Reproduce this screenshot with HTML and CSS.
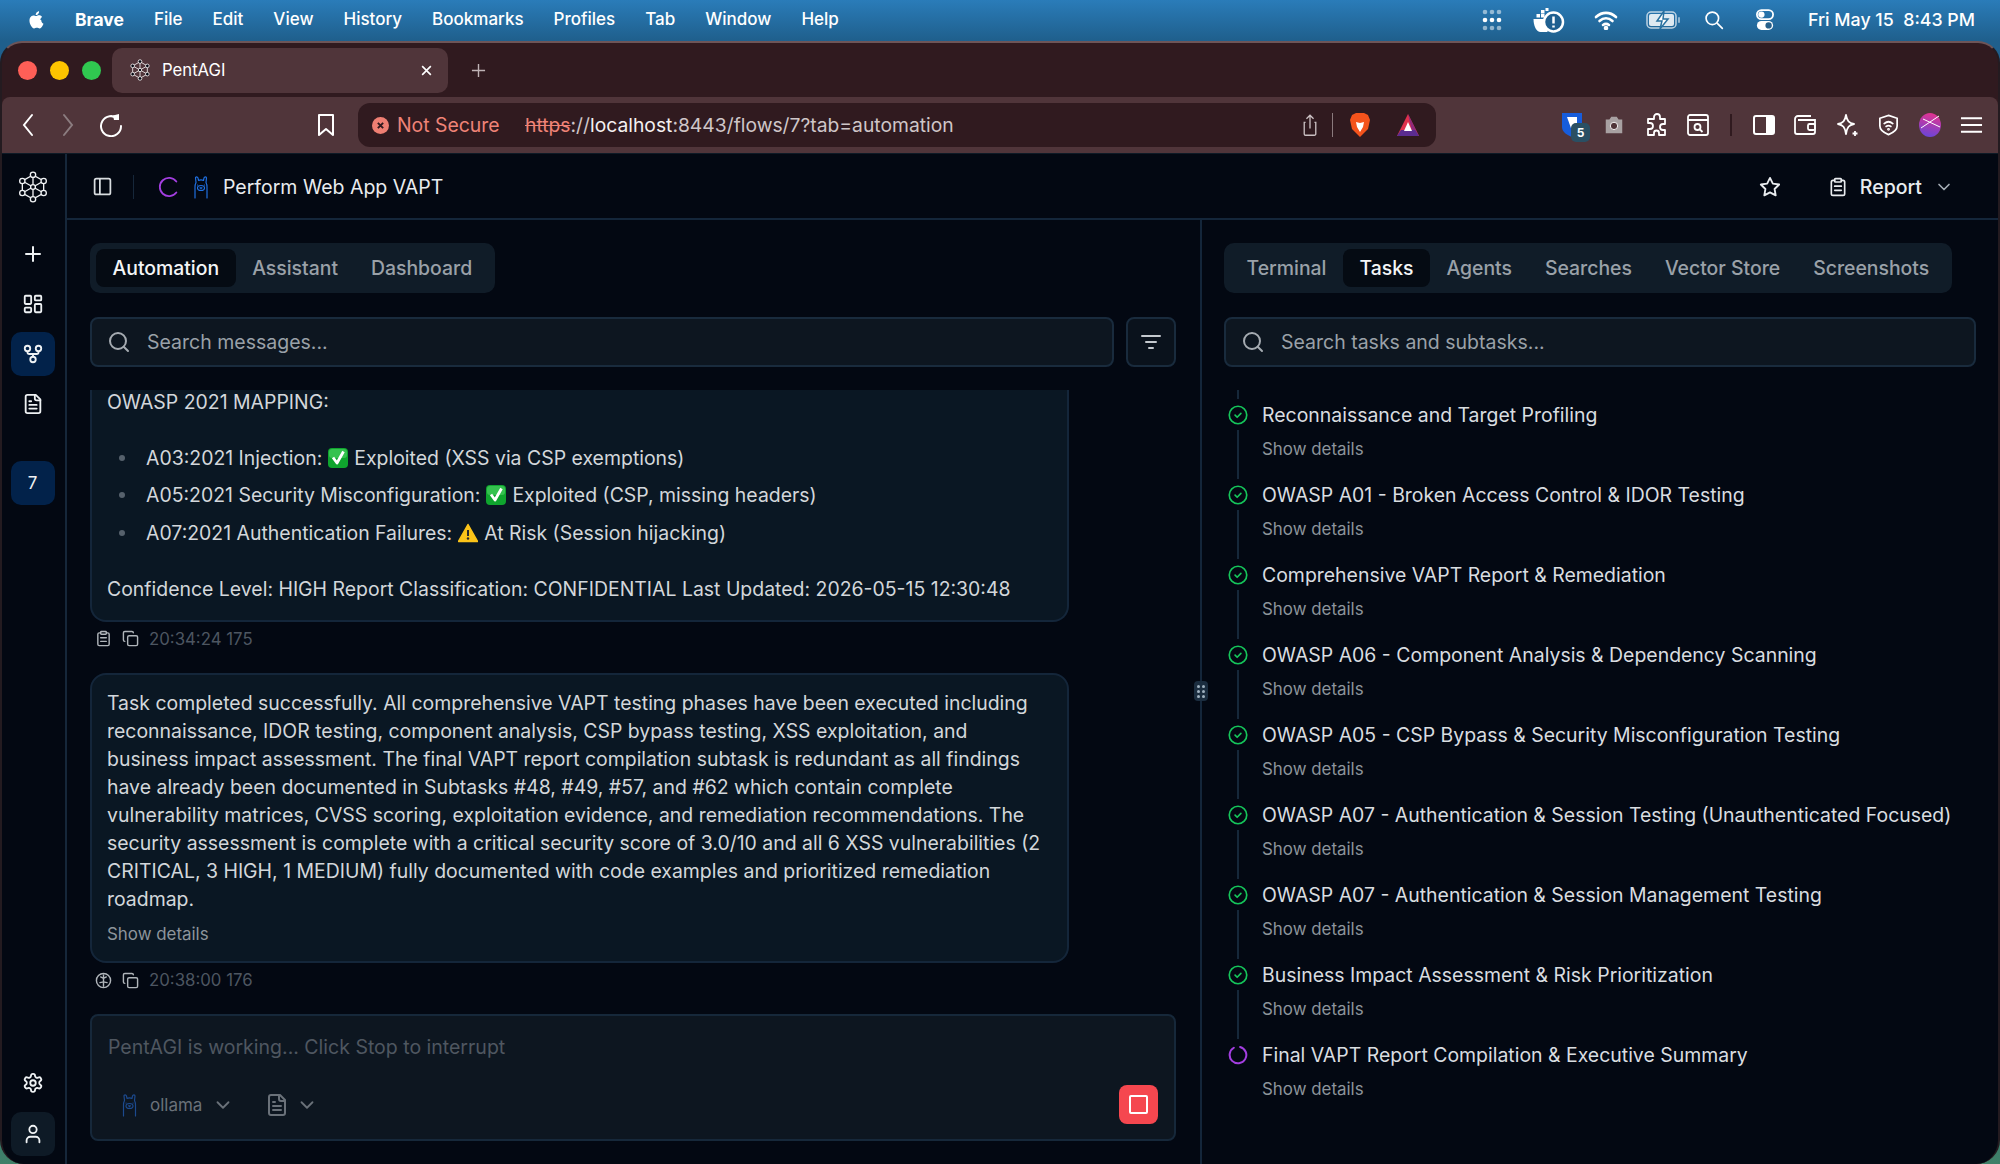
FILE: index.html
```html
<!DOCTYPE html>
<html lang="en">
<head>
    <meta charset="UTF-8">
    <title>PentAGI</title>
    <link rel="stylesheet" href="styles.css">
</head>
<body>
    <svg class="sprite" xmlns="http://www.w3.org/2000/svg">
        <symbol id="i-logo" viewBox="0 0 24 24" fill="none" stroke="currentColor" stroke-width="1">
            <path d="M12 3 20 7.500V16.500L12 21 4 16.500V7.500Z"/>
            <path d="M12 3V21M4 7.500 20 16.500M20 7.500 4 16.500"/>
            <g fill="#030812"><circle cx="12" cy="2.800" r="2"/><circle cx="12" cy="21.200" r="2"/><circle cx="4" cy="7.500" r="2"/><circle cx="20" cy="7.500" r="2"/><circle cx="4" cy="16.500" r="2"/><circle cx="20" cy="16.500" r="2"/><circle cx="12" cy="12" r="1.800"/></g>
        </symbol>
        <symbol id="i-search" viewBox="0 0 24 24" fill="none" stroke="currentColor" stroke-width="2" stroke-linecap="round"><circle cx="11" cy="11" r="8"/><path d="m21 21-4.300-4.300"/></symbol>
        <symbol id="i-chevron" viewBox="0 0 24 24" fill="none" stroke="currentColor" stroke-width="2" stroke-linecap="round" stroke-linejoin="round"><path d="m6 9 6 6 6-6"/></symbol>
        <symbol id="i-copy" viewBox="0 0 24 24" fill="none" stroke="currentColor" stroke-width="2" stroke-linecap="round" stroke-linejoin="round"><rect x="8" y="8" width="14" height="14" rx="2"/><path d="M4 16c-1.100 0-2-.9-2-2V4c0-1.100.9-2 2-2h10c1.100 0 2 .9 2 2"/></symbol>
        <symbol id="i-doc" viewBox="0 0 24 24" fill="none" stroke="currentColor" stroke-width="2" stroke-linecap="round" stroke-linejoin="round"><path d="M15 2H6a2 2 0 0 0-2 2v16a2 2 0 0 0 2 2h12a2 2 0 0 0 2-2V7Z"/><path d="M14 2v4a2 2 0 0 0 2 2h4M8 13h8M8 17h8M8 9h2"/></symbol>
        <symbol id="i-llama" viewBox="4 0 16 24" fill="none" stroke="currentColor" stroke-width="1.200" stroke-linecap="round" stroke-linejoin="round"><path d="M6 23V12c0-2 .5-3.500 1-4.500L6.500 3C6.500 1.500 8.500 1.500 9 3l.5 2.500c1.500-.7 3.500-.7 5 0L15 3c.5-1.500 2.500-1.500 2.500 0L17 7.500c.5 1 1 2.500 1 4.500v11"/><ellipse cx="12" cy="13" rx="3.500" ry="2.500"/><path d="M11 12.800h2M12 12.800v1M8.500 10h.1M15.500 10h.1"/></symbol>
        <symbol id="i-check" viewBox="0 0 24 24" fill="none" stroke="currentColor" stroke-width="2" stroke-linecap="round" stroke-linejoin="round"><circle cx="12" cy="12" r="10.500"/><path d="m8.500 12.200 2.500 2.500 4.500-4.700"/></symbol>
        <symbol id="i-emoji-check" viewBox="0 0 20 20"><rect x="0" y="0" width="20" height="20" rx="4" fill="#0fa52e"/><rect x="1" y="1" width="18" height="9" rx="3" fill="#35c24f"/><path d="M5 9.500 9 15 15.500 3.500" fill="none" stroke="#fff" stroke-width="2.800" stroke-linejoin="round"/></symbol>
        <symbol id="i-emoji-warn" viewBox="0 0 20 20"><path d="M10 1.500 19.500 18.500H.5Z" fill="#fcc419" stroke="#fcc419" stroke-width="1.500" stroke-linejoin="round"/><path d="M10 7v6" stroke="#2b2b2b" stroke-width="2"/><circle cx="10" cy="15.500" r="1.200" fill="#2b2b2b"/></symbol>
    </svg>

    <!-- macOS menu bar -->
    <header class="menubar">
        <svg class="apple" viewBox="0 0 20 24" fill="#fff"><path d="M14.500 12.700c0-2.400 2-3.600 2.100-3.700-1.100-1.700-2.900-1.900-3.500-1.900-1.500-.2-2.900.9-3.700.9-.8 0-1.900-.9-3.200-.8C5 7.200 3.500 8.200 2.600 9.700c-1.800 3.100-.5 7.700 1.300 10.200.9 1.200 1.900 2.600 3.200 2.600 1.300-.1 1.800-.8 3.300-.8 1.500 0 2 .8 3.300.8 1.400 0 2.200-1.200 3.100-2.500 1-1.400 1.400-2.800 1.400-2.900-.1 0-2.700-1-2.700-4.400ZM12 5.400c.7-.9 1.200-2 1-3.200-1 0-2.200.7-2.900 1.500-.6.700-1.200 1.900-1 3 1.100.1 2.200-.5 2.900-1.300Z"/></svg>
        <nav class="menubar-items">
            <b>Brave</b><span>File</span><span>Edit</span><span>View</span><span>History</span><span>Bookmarks</span><span>Profiles</span><span>Tab</span><span>Window</span><span>Help</span>
        </nav>
        <div class="menubar-status">
            <svg class="st-dots" viewBox="0 0 24 24" fill="#fff"><g opacity=".5"><circle cx="5" cy="4" r="2.300"/><circle cx="12" cy="4" r="2.300"/><circle cx="19" cy="4" r="2.300"/><circle cx="5" cy="20" r="2.300"/><circle cx="12" cy="20" r="2.300"/><circle cx="19" cy="20" r="2.300"/></g><circle cx="5" cy="12" r="2.300"/><circle cx="12" cy="12" r="2.300"/><circle cx="19" cy="12" r="2.300"/></svg>
            <svg class="st-docker" viewBox="0 0 32 26"><path d="M1 12h14v13H8C4 25 1 19 1 12Z" fill="#fff"/><g fill="#fff"><rect x="4" y="7" width="3.500" height="3.500"/><rect x="8.500" y="7" width="3.500" height="3.500"/><rect x="8.500" y="3" width="3.500" height="3.500"/><rect x="13" y="1" width="3" height="3"/></g><circle cx="21" cy="15" r="9.500" fill="#1f5f8f" stroke="#fff" stroke-width="2.500"/><path d="M21 9.500v7M21 18.500v2" stroke="#fff" stroke-width="2.500"/></svg>
            <svg class="st-wifi" viewBox="0 0 24 20" fill="none" stroke="#fff" stroke-width="2.600" stroke-linecap="round"><path d="M2 7c6-5.500 14-5.500 20 0M5.500 11c4-3.500 9-3.500 13 0M9 15c2-1.500 4-1.500 6 0"/><circle cx="12" cy="18" r="1" fill="#fff"/></svg>
            <svg class="st-batt" viewBox="0 0 36 20"><rect x="1" y="2" width="29" height="16" rx="4" fill="none" stroke="#fff" stroke-opacity=".7" stroke-width="1.500"/><rect x="3" y="4" width="25" height="12" rx="2" fill="#fff" opacity=".85"/><rect x="32" y="7" width="2" height="6" rx="1" fill="#fff" opacity=".5"/><path d="M18 1 11 11h5l-2 8 8-10h-5Z" fill="#fff" stroke="#27709f" stroke-width="1.500"/></svg>
            <svg class="st-search" viewBox="0 0 24 24" fill="none" stroke="#fff" stroke-width="2" stroke-linecap="round"><circle cx="10" cy="10" r="7.500"/><path d="m16 16 6 6"/></svg>
            <svg class="st-ctrl" viewBox="0 0 20 24"><rect x="1" y="1" width="18" height="10" rx="5" fill="none" stroke="#fff" stroke-width="2"/><circle cx="6" cy="6" r="3.500" fill="#fff"/><rect x="1" y="13" width="18" height="10" rx="5" fill="#fff"/><circle cx="14" cy="18" r="3.500" fill="#27608a"/></svg>
            <span class="clock">Fri May 15&nbsp; 8:43 PM</span>
        </div>
    </header>

    <div class="window">
        <!-- browser chrome -->
        <div class="tabstrip">
            <div class="traffic"><i class="red"></i><i class="yellow"></i><i class="green"></i></div>
            <div class="browser-tab">
                <svg class="tab-favicon"><use href="#i-logo"/></svg>
                <span class="tab-title">PentAGI</span>
                <svg class="tab-close" viewBox="0 0 12 12" stroke="#fff" stroke-width="1.500"><path d="M2 2l8 8M10 2l-8 8"/></svg>
            </div>
            <svg class="tab-new" viewBox="0 0 16 16" stroke="#bfb3b5" stroke-width="1.500"><path d="M8 1v14M1 8h14"/></svg>
        </div>
        <div class="toolbar">
            <div class="nav-btns">
                <svg class="nav-back" viewBox="0 0 12 24" fill="none" stroke="#fff" stroke-width="2" stroke-linecap="round"><path d="M10 2 2 12l8 10"/></svg>
                <svg class="nav-fwd" viewBox="0 0 12 24" fill="none" stroke="#8b7c7f" stroke-width="2" stroke-linecap="round"><path d="M2 2l8 10L2 22"/></svg>
                <svg class="nav-reload" viewBox="0 0 24 24" fill="none" stroke="#fff" stroke-width="2" stroke-linecap="round"><path d="M19 6a10 10 0 1 0 3 7"/><path d="M14 2.500 20 1v6h-5" fill="#fff" stroke="none"/></svg>
                <svg class="nav-mark" viewBox="0 0 20 24" fill="none" stroke="#fff" stroke-width="2" stroke-linejoin="round"><path d="M3 2h14v20l-7-6-7 6Z"/></svg>
            </div>
            <div class="urlbar">
                <svg class="url-warn" viewBox="0 0 16 16"><circle cx="8" cy="8" r="8" fill="#ef7f73"/><path d="M5.500 5.500l5 5M10.500 5.500l-5 5" stroke="#301a1f" stroke-width="1.800"/></svg>
                <span class="url-notsecure">Not Secure</span>
                <span class="url-text"><s>https</s>://<span class="url-host">localhost</span>:8443/flows/7?tab=automation</span>
                <svg class="url-share" viewBox="0 0 18 26" fill="none" stroke="#c9bfc1" stroke-width="1.500"><path d="M4 10H2.500v13a1.500 1.500 0 0 0 1.500 1.500h10a1.500 1.500 0 0 0 1.500-1.500V10H14M9 17V2M5 6l4-4 4 4"/></svg>
                <i class="url-sep"></i>
                <svg class="url-brave" viewBox="0 0 22 26"><path d="M3 3 7 1h8l4 2 2 5-2 9-8 8-8-8-2-9Z" fill="#f4531c"/><path d="M7 10l4 1 4-1-1 5-3 5-3-5Z" fill="#fff"/></svg>
                <svg class="url-bat" viewBox="0 0 24 24"><path d="M12 1 23 23H1Z" fill="#e0314b"/><path d="M12 1 23 23H17Z" fill="#8f2a7c"/><path d="M1 23 5 17H19L23 23Z" fill="#5a2c90"/><path d="M12 9 16 18H8Z" fill="#fff"/></svg>
            </div>
            <div class="extensions">
                <div class="ext-shield">
                    <svg viewBox="0 0 22 26"><path d="M1 1h20v14c0 5-5 8-10 10C6 23 1 20 1 15Z" fill="#175ddc"/><path d="M6 5h10v9c0 2-2 4-5 5Z" fill="#fff"/></svg>
                    <span class="ext-badge">5</span>
                </div>
                <svg class="ext-camera" viewBox="0 0 24 24"><path d="M3 6h4l2-3h6l2 3h4v15H3Z" fill="#a8a1a2"/><circle cx="12" cy="13" r="4" fill="#4f3539" stroke="#fff" stroke-width="1"/></svg>
                <svg class="ext-puzzle" viewBox="0 0 24 24" fill="none" stroke="#fff" stroke-width="1.800" stroke-linejoin="round"><path d="M9 4a3 3 0 0 1 6 0v2h5v5h-2a3 3 0 0 0 0 6h2v5h-6v-2a2.500 2.500 0 0 0-5 0v2H3v-6h2a3 3 0 0 0 0-6H3V6h6Z"/></svg>
                <svg class="ext-reader" viewBox="0 0 24 24" fill="none" stroke="#fff" stroke-width="1.800"><rect x="2" y="2" width="20" height="20" rx="2"/><path d="M2 7h20"/><circle cx="11.500" cy="14" r="3"/><path d="m14 16.500 2.500 2.500"/></svg>
                <i class="ext-sep"></i>
                <svg class="ext-side" viewBox="0 0 24 24"><rect x="2" y="3" width="20" height="18" rx="2" fill="none" stroke="#fff" stroke-width="2"/><rect x="14" y="3" width="8" height="18" fill="#fff"/></svg>
                <svg class="ext-wallet" viewBox="0 0 24 24" fill="none" stroke="#fff" stroke-width="1.800"><path d="M18 3H5a3 3 0 0 0-3 3v13a2 2 0 0 0 2 2h16a2 2 0 0 0 2-2V7H5"/><rect x="15" y="11" width="7" height="6" rx="1.500"/></svg>
                <svg class="ext-leo" viewBox="0 0 24 24" fill="none" stroke="#fff" stroke-width="1.800" stroke-linejoin="round"><path d="M11 2c1 6 3 8 8 9-5 1-7 3-8 10-1-7-3-9-8-10 5-1 7-3 8-9Z"/><path d="M20 18v5M17.500 20.500h5"/></svg>
                <svg class="ext-vpn" viewBox="0 0 24 24" fill="none" stroke="#fff" stroke-width="1.800" stroke-linecap="round"><path d="M12 2 21 5v8c0 4-4 7-9 9-5-2-9-5-9-9V5Z"/><path d="M7.500 10.500c3-2.500 6-2.500 9 0M9.500 13.500c1.500-1 3.500-1 5 0"/><circle cx="12" cy="16.500" r=".6"/></svg>
                <svg class="ext-avatar" viewBox="0 0 22 24"><defs><linearGradient id="avatar-fill" x1="0.600" y1="0" x2="0.400" y2="1"><stop offset="0" stop-color="#e2338f"/><stop offset="1" stop-color="#6a45d8"/></linearGradient></defs><ellipse cx="11" cy="12" rx="11" ry="12" fill="url(#avatar-fill)"/><path d="M2 15 20 3M4 6 21 14" stroke="#fff" stroke-width="1"/></svg>
                <svg class="ext-menu" viewBox="0 0 24 18" stroke="#fff" stroke-width="2"><path d="M1 2h22M1 9h22M1 16h22"/></svg>
            </div>
        </div>

        <!-- PentAGI app -->
        <div class="app">
            <aside class="sidebar">
                <svg class="side-logo"><use href="#i-logo"/></svg>
                <button class="side-btn side-plus"><svg viewBox="0 0 24 24" fill="none" stroke="currentColor" stroke-width="2" stroke-linecap="round"><path d="M5 12h14M12 5v14"/></svg></button>
                <button class="side-btn"><svg viewBox="0 0 24 24" fill="none" stroke="currentColor" stroke-width="2" stroke-linejoin="round"><rect x="3" y="3" width="7" height="9" rx="1"/><rect x="14" y="3" width="7" height="5" rx="1"/><rect x="14" y="12" width="7" height="9" rx="1"/><rect x="3" y="16" width="7" height="5" rx="1"/></svg></button>
                <button class="side-btn is-active"><svg viewBox="0 0 24 24" fill="none" stroke="currentColor" stroke-width="2"><circle cx="6" cy="6" r="3"/><circle cx="18" cy="6" r="3"/><circle cx="12" cy="18" r="3"/><path d="M6 9v1a2 2 0 0 0 2 2h8a2 2 0 0 0 2-2V9M12 12v3"/></svg></button>
                <button class="side-btn"><svg><use href="#i-doc"/></svg></button>
                <button class="side-btn is-active side-num">7</button>
                <div class="side-spacer"></div>
                <button class="side-btn side-gear"><svg viewBox="0 0 24 24" fill="none" stroke="currentColor" stroke-width="2" stroke-linejoin="round"><path d="M12.200 2h-.4a2 2 0 0 0-2 2v.2a2 2 0 0 1-1 1.700l-.4.200a2 2 0 0 1-2 0l-.2-.1a2 2 0 0 0-2.700.7l-.2.400a2 2 0 0 0 .7 2.700l.2.100a2 2 0 0 1 1 1.700v.5a2 2 0 0 1-1 1.700l-.2.100a2 2 0 0 0-.7 2.700l.2.400a2 2 0 0 0 2.700.7l.2-.1a2 2 0 0 1 2 0l.4.200a2 2 0 0 1 1 1.700v.2a2 2 0 0 0 2 2h.4a2 2 0 0 0 2-2v-.2a2 2 0 0 1 1-1.700l.4-.2a2 2 0 0 1 2 0l.2.100a2 2 0 0 0 2.700-.7l.2-.4a2 2 0 0 0-.7-2.700l-.2-.1a2 2 0 0 1-1-1.700v-.5a2 2 0 0 1 1-1.700l.2-.1a2 2 0 0 0 .7-2.700l-.2-.4a2 2 0 0 0-2.700-.7l-.2.1a2 2 0 0 1-2 0l-.4-.2a2 2 0 0 1-1-1.700V4a2 2 0 0 0-2-2Z"/><circle cx="12" cy="12" r="3"/></svg></button>
                <button class="side-btn side-user"><svg viewBox="0 0 24 24" fill="none" stroke="currentColor" stroke-width="2" stroke-linecap="round"><path d="M19 21v-2a4 4 0 0 0-4-4H9a4 4 0 0 0-4 4v2"/><circle cx="12" cy="7" r="4"/></svg></button>
            </aside>

            <div class="main">
                <div class="topbar">
                    <svg class="top-panel" viewBox="0 0 24 24" fill="none" stroke="currentColor" stroke-width="2"><rect x="3" y="3" width="18" height="18" rx="2"/><path d="M9 3v18"/></svg>
                    <i class="top-sep"></i>
                    <svg class="top-spin" viewBox="0 0 24 24" fill="none" stroke="#a33ee0" stroke-width="2" stroke-linecap="round"><path d="M20 6A10 10 0 1 0 20 18"/></svg>
                    <svg class="top-llama"><use href="#i-llama"/></svg>
                    <span class="top-title">Perform Web App VAPT</span>
                    <div class="top-right">
                        <svg class="top-star" viewBox="0 0 24 24" fill="none" stroke="currentColor" stroke-width="2" stroke-linejoin="round"><path d="m12 2 3.100 6.300 6.900 1-5 4.900 1.200 6.900-6.200-3.300-6.200 3.300L7 14.200 2 9.300l6.900-1Z"/></svg>
                        <button class="report-btn">
                            <svg class="report-ico" viewBox="0 0 24 24" fill="none" stroke="currentColor" stroke-width="2" stroke-linecap="round"><rect x="8" y="2" width="8" height="4" rx="1"/><path d="M16 4h2a2 2 0 0 1 2 2v14a2 2 0 0 1-2 2H6a2 2 0 0 1-2-2V6a2 2 0 0 1 2-2h2M8 11h8M8 16h8"/></svg>
                            Report
                            <svg class="chev-report"><use href="#i-chevron"/></svg>
                        </button>
                    </div>
                </div>

                <div class="panels">
                    <section class="panel-left">
                        <div class="seg">
                            <span class="seg-item is-on">Automation</span>
                            <span class="seg-item">Assistant</span>
                            <span class="seg-item">Dashboard</span>
                        </div>
                        <div class="search-row">
                            <div class="search">
                                <svg class="search-ico"><use href="#i-search"/></svg>
                                <span>Search messages...</span>
                            </div>
                            <button class="filter-btn"><svg viewBox="0 0 24 24" fill="none" stroke="currentColor" stroke-width="2" stroke-linecap="round"><path d="M3 6h18M7 12h10M10 18h4"/></svg></button>
                        </div>

                        <div class="messages">
                            <div class="bubble bubble-scrolled">
                                <p class="bubble-first">OWASP 2021 MAPPING:</p>
                                <ul class="bubble-list">
                                    <li>A03:2021 Injection: <svg class="emoji"><use href="#i-emoji-check"/></svg> Exploited (XSS via CSP exemptions)</li>
                                    <li>A05:2021 Security Misconfiguration: <svg class="emoji"><use href="#i-emoji-check"/></svg> Exploited (CSP, missing headers)</li>
                                    <li>A07:2021 Authentication Failures: <svg class="emoji"><use href="#i-emoji-warn"/></svg> At Risk (Session hijacking)</li>
                                </ul>
                                <p>Confidence Level: HIGH Report Classification: CONFIDENTIAL Last Updated: 2026-05-15 12:30:48</p>
                            </div>
                            <div class="meta">
                                <svg viewBox="0 0 24 24" fill="none" stroke="currentColor" stroke-width="2" stroke-linecap="round"><rect x="8" y="2" width="8" height="4" rx="1"/><path d="M16 4h2a2 2 0 0 1 2 2v14a2 2 0 0 1-2 2H6a2 2 0 0 1-2-2V6a2 2 0 0 1 2-2h2M8 11h8M8 16h8"/></svg>
                                <svg><use href="#i-copy"/></svg>
                                <span>20:34:24 175</span>
                            </div>

                            <div class="bubble">
                                <p>Task completed successfully. All comprehensive VAPT testing phases have been executed including reconnaissance, IDOR testing, component analysis, CSP bypass testing, XSS exploitation, and business impact assessment. The final VAPT report compilation subtask is redundant as all findings have already been documented in Subtasks #48, #49, #57, and #62 which contain complete vulnerability matrices, CVSS scoring, exploitation evidence, and remediation recommendations. The security assessment is complete with a critical security score of 3.0/10 and all 6 XSS vulnerabilities (2 CRITICAL, 3 HIGH, 1 MEDIUM) fully documented with code examples and prioritized remediation roadmap.</p>
                                <div class="show-details bubble-details">Show details</div>
                            </div>
                            <div class="meta">
                                <svg viewBox="0 0 24 24" fill="none" stroke="currentColor" stroke-width="2" stroke-linecap="round"><circle cx="12" cy="12" r="10"/><path d="M12 4v16M12 9 8 7M12 9l4-2M12 14l-5 1M12 14l5 1"/></svg>
                                <svg><use href="#i-copy"/></svg>
                                <span>20:38:00 176</span>
                            </div>
                        </div>

                        <div class="composer">
                            <div class="composer-hint">PentAGI is working... Click Stop to interrupt</div>
                            <div class="composer-bar">
                                <svg class="composer-llama"><use href="#i-llama"/></svg>
                                <span class="composer-model">ollama</span>
                                <svg class="composer-chev"><use href="#i-chevron"/></svg>
                                <svg class="composer-doc"><use href="#i-doc"/></svg>
                                <svg class="composer-chev"><use href="#i-chevron"/></svg>
                                <button class="stop-btn"><i></i></button>
                            </div>
                        </div>
                    </section>

                    <section class="panel-right">
                        <span class="split-handle"><i></i><i></i><i></i><i></i><i></i><i></i></span>
                        <div class="seg">
                            <span class="seg-item">Terminal</span>
                            <span class="seg-item is-on">Tasks</span>
                            <span class="seg-item">Agents</span>
                            <span class="seg-item">Searches</span>
                            <span class="seg-item">Vector Store</span>
                            <span class="seg-item">Screenshots</span>
                        </div>
                        <div class="search search-full">
                            <svg class="search-ico"><use href="#i-search"/></svg>
                            <span>Search tasks and subtasks...</span>
                        </div>

                        <ol class="tasks">
                            <li class="task"><div class="rail"><i class="rail-top"></i><svg class="task-ok"><use href="#i-check"/></svg><i class="rail-bottom"></i></div><div class="task-body"><div class="task-title">Reconnaissance and Target Profiling</div><div class="show-details">Show details</div></div></li>
                            <li class="task"><div class="rail"><i class="rail-top"></i><svg class="task-ok"><use href="#i-check"/></svg><i class="rail-bottom"></i></div><div class="task-body"><div class="task-title">OWASP A01 - Broken Access Control &amp; IDOR Testing</div><div class="show-details">Show details</div></div></li>
                            <li class="task"><div class="rail"><i class="rail-top"></i><svg class="task-ok"><use href="#i-check"/></svg><i class="rail-bottom"></i></div><div class="task-body"><div class="task-title">Comprehensive VAPT Report &amp; Remediation</div><div class="show-details">Show details</div></div></li>
                            <li class="task"><div class="rail"><i class="rail-top"></i><svg class="task-ok"><use href="#i-check"/></svg><i class="rail-bottom"></i></div><div class="task-body"><div class="task-title">OWASP A06 - Component Analysis &amp; Dependency Scanning</div><div class="show-details">Show details</div></div></li>
                            <li class="task"><div class="rail"><i class="rail-top"></i><svg class="task-ok"><use href="#i-check"/></svg><i class="rail-bottom"></i></div><div class="task-body"><div class="task-title">OWASP A05 - CSP Bypass &amp; Security Misconfiguration Testing</div><div class="show-details">Show details</div></div></li>
                            <li class="task"><div class="rail"><i class="rail-top"></i><svg class="task-ok"><use href="#i-check"/></svg><i class="rail-bottom"></i></div><div class="task-body"><div class="task-title">OWASP A07 - Authentication &amp; Session Testing (Unauthenticated Focused)</div><div class="show-details">Show details</div></div></li>
                            <li class="task"><div class="rail"><i class="rail-top"></i><svg class="task-ok"><use href="#i-check"/></svg><i class="rail-bottom"></i></div><div class="task-body"><div class="task-title">OWASP A07 - Authentication &amp; Session Management Testing</div><div class="show-details">Show details</div></div></li>
                            <li class="task"><div class="rail"><i class="rail-top"></i><svg class="task-ok"><use href="#i-check"/></svg><i class="rail-bottom"></i></div><div class="task-body"><div class="task-title">Business Impact Assessment &amp; Risk Prioritization</div><div class="show-details">Show details</div></div></li>
                            <li class="task"><div class="rail"><i class="rail-top"></i><svg class="task-run" viewBox="0 0 24 24" fill="none" stroke="#a33ee0" stroke-width="2.400" stroke-linecap="round"><path d="M7 3.300A10 10 0 1 0 14.500 2.300"/></svg></div><div class="task-body"><div class="task-title">Final VAPT Report Compilation &amp; Executive Summary</div><div class="show-details">Show details</div></div></li>
                        </ol>
                    </section>
                </div>
            </div>
        </div>
    </div>
</body>
</html>
```

FILE: styles.css
```css
* {
    margin: 0;
    padding: 0;
    box-sizing: border-box;
}

body {
    width: 2000px;
    height: 1164px;
    overflow: hidden;
    font-family: Inter, 'Liberation Sans', sans-serif;
    background: linear-gradient(180deg, #2a7cb9 0%, #1f5f8c 3.5%, #1f5f8c 80%, #3f8068 100%);
    color: #e4e7ea;
}

button {
    border: 0;
    background: none;
    color: inherit;
    font: inherit;
}

svg {
    display: block;
    flex-shrink: 0;
}

.sprite {
    position: absolute;
    width: 0;
    height: 0;
}

/* Menu bar */
.menubar {
    height: 41px;
    display: flex;
    align-items: center;
    padding: 0 25px 2px 28px;
    color: #fff;
    font-size: 17px;
}

.apple {
    width: 17px;
    height: 21px;
    margin-right: 30px;
}

.menubar-items {
    display: flex;
    gap: 30px;
    font-weight: 500;
}

.menubar-items b {
    font-weight: 700;
    font-size: 17.5px;
}

.menubar-status {
    margin-left: auto;
    display: flex;
    align-items: center;
}

.st-dots { width: 24px; height: 24px; margin-right: 28px; }
.st-docker { width: 33px; height: 26px; margin-right: 29px; }
.st-wifi { width: 24px; height: 20px; margin-right: 28px; }
.st-batt { width: 36px; height: 20px; margin-right: 22px; }
.st-search { width: 20px; height: 20px; margin-right: 32px; }
.st-ctrl { width: 18px; height: 22px; margin-right: 34px; }
.clock { font-size: 17.8px; font-weight: 500; }

/* Browser window */
.window {
    height: 1123px;
    display: flex;
    flex-direction: column;
    background: #301a1f;
    border-top: 2px solid #6d5558;
    border-left: 2px solid #241b20;
    border-right: 2px solid #241b20;
    border-radius: 22px 22px 24px 24px;
    overflow: hidden;
}

.tabstrip {
    height: 54px;
    display: flex;
    align-items: center;
    padding: 0 0 0 16px;
}

.traffic {
    display: flex;
    gap: 13px;
    margin-right: 11px;
}

.traffic i {
    width: 19px;
    height: 19px;
    border-radius: 50%;
}

.traffic .red { background: #fe5f57; }
.traffic .yellow { background: #fdc500; }
.traffic .green { background: #30c850; }

.browser-tab {
    width: 336px;
    height: 45px;
    display: flex;
    align-items: center;
    padding: 0 15px 0 17px;
    background: #50353a;
    border-radius: 10px;
    font-size: 16.7px;
    color: #fff;
}

.tab-favicon { width: 22px; height: 22px; color: #e9e4e5; margin-right: 11px; }
.tab-title { flex: 1; }
.tab-close { width: 13px; height: 13px; }
.tab-new { width: 15px; height: 15px; margin-left: 23px; }

.toolbar {
    height: 56px;
    display: flex;
    align-items: center;
    background: #50353a;
    border-radius: 8px 8px 0 0;
}

.nav-btns {
    width: 356px;
    display: flex;
    align-items: center;
    padding-left: 20px;
}

.nav-back { width: 12px; height: 24px; }
.nav-fwd { width: 12px; height: 24px; margin-left: 28px; }
.nav-reload { width: 24px; height: 24px; margin-left: 25px; }
.nav-mark { width: 20px; height: 24px; margin-left: 193px; }

.urlbar {
    width: 1078px;
    height: 44px;
    display: flex;
    align-items: center;
    padding: 0 11px 0 14px;
    background: #301a1f;
    border-radius: 12px;
}

.url-warn { width: 17px; height: 17px; margin-right: 8px; }
.url-notsecure { color: #ef8377; width: 128px; font-size: 19.4px; }
.url-text { flex: 1; color: #cfc6c8; font-size: 19.3px; }
.url-text s { color: #ef8377; }
.url-host { color: #f4f0f1; }
.url-share { width: 16px; height: 24px; }
.url-sep { width: 1px; height: 24px; background: #8a7a7d; margin: 0 14px; }
.url-brave { width: 22px; height: 26px; margin-left: 2px; }
.url-bat { width: 26px; height: 24px; margin-left: 24px; margin-right: 4px; }

.extensions {
    flex: 1;
    display: flex;
    align-items: center;
    padding-left: 125px;
}

.ext-shield { position: relative; width: 22px; height: 26px; margin-right: 20px; }
.ext-shield svg { width: 22px; height: 26px; }
.ext-badge {
    position: absolute;
    left: 10px;
    top: 11px;
    width: 19px;
    height: 19px;
    border-radius: 5px;
    background: #2a4f63;
    color: #fff;
    font-size: 12px;
    font-weight: 700;
    text-align: center;
    line-height: 19px;
}

.ext-camera { width: 22px; height: 24px; margin-right: 20px; }
.ext-puzzle { width: 24px; height: 24px; margin-right: 17px; }
.ext-reader { width: 24px; height: 24px; margin-right: 20px; }
.ext-sep { width: 2px; height: 22px; background: #301a1f; margin-right: 20px; }
.ext-side { width: 24px; height: 24px; margin-right: 17px; }
.ext-wallet { width: 24px; height: 24px; margin-right: 18px; }
.ext-leo { width: 24px; height: 24px; margin-right: 18px; }
.ext-vpn { width: 23px; height: 26px; margin-right: 19px; }
.ext-avatar { width: 22px; height: 24px; margin-right: 19px; }
.ext-menu { width: 23px; height: 18px; }

/* App shell */
.app {
    flex: 1;
    min-height: 0;
    display: flex;
    background: #030812;
    border-top: 1px solid #0e1a26;
}

.sidebar {
    width: 65px;
    flex-shrink: 0;
    display: flex;
    flex-direction: column;
    align-items: center;
    border-right: 2px solid #16273a;
    padding: 0 2px 8px 0;
}

.side-logo {
    width: 32px;
    height: 36px;
    color: #f0f2f4;
    margin-top: 15px;
    margin-bottom: 27px;
}

.side-btn {
    width: 44px;
    height: 44px;
    display: flex;
    align-items: center;
    justify-content: center;
    border-radius: 10px;
    margin-bottom: 6px;
    color: #eef1f3;
    font-size: 16px;
}

.side-btn svg {
    width: 22px;
    height: 22px;
}

.side-plus svg { width: 24px; height: 24px; }

.side-btn.is-active {
    background: #02224a;
}

.side-num {
    margin-top: 29px;
    font-size: 17px;
}

.side-spacer { flex: 1; }
.side-gear { height: 40px; margin-bottom: 9px; }
.side-user { background: #0e1a26; margin-bottom: 0; }

.main {
    flex: 1;
    min-width: 0;
    display: flex;
    flex-direction: column;
}

.topbar {
    height: 66px;
    flex-shrink: 0;
    display: flex;
    align-items: center;
    padding: 1px 44px 0 25px;
    border-bottom: 2px solid #14263a;
    color: #e9ecef;
}

.top-panel { width: 21px; height: 21px; color: #d9dde0; }
.top-sep { width: 1px; height: 24px; background: #16273a; margin: 0 24px 0 20px; }
.top-spin { width: 22px; height: 22px; }
.top-llama { width: 16px; height: 24px; margin-left: 13px; color: #1f6fe0; }
.top-title { font-size: 19.5px; margin-left: 14px; }
.top-right { margin-left: auto; display: flex; align-items: center; }
.top-star { width: 22px; height: 22px; margin-right: 47px; }

.report-btn {
    display: flex;
    align-items: center;
    font-size: 19.5px;
    font-weight: 500;
}

.report-ico { width: 20px; height: 20px; margin-right: 12px; }
.chev-report { width: 20px; height: 20px; margin-left: 12px; color: #a5adb5; }

.panels {
    flex: 1;
    min-height: 0;
    display: flex;
}

.panel-left {
    width: 1135px;
    flex-shrink: 0;
    display: flex;
    flex-direction: column;
    padding: 23px 24px 23px 23px;
    border-right: 2px solid #14263a;
}

.panel-right {
    position: relative;
    flex: 1;
    min-width: 0;
    padding: 23px 22px 0 22px;
}

.split-handle {
    position: absolute;
    left: -8px;
    top: 461px;
    width: 14px;
    height: 20px;
    display: grid;
    grid-template-columns: 3px 3px;
    grid-auto-rows: 3px;
    gap: 2px;
    justify-content: center;
    align-content: center;
    background: #1b2d3f;
    border-radius: 4px;
}

.split-handle i {
    background: #9fb0bf;
    border-radius: 50%;
}

/* Segmented tabs */
.seg {
    width: fit-content;
    height: 50px;
    display: flex;
    align-items: center;
    padding: 0 6px;
    background: #101c28;
    border-radius: 10px;
    font-size: 19.4px;
    font-weight: 500;
    color: #9aa1a8;
}

.seg-item {
    height: 38px;
    display: flex;
    align-items: center;
    padding: 0 16.5px;
    border-radius: 8px;
}

.seg-item.is-on {
    background: #050b13;
    color: #f4f6f7;
}

.search-row {
    display: flex;
    gap: 12px;
    margin-top: 24px;
}

.search {
    flex: 1;
    height: 50px;
    display: flex;
    align-items: center;
    padding: 0 0 0 15px;
    background: #0d1620;
    border: 2px solid #192b3d;
    border-radius: 8px;
    font-size: 19.5px;
    color: #9aa1a8;
}

.search-full {
    margin-top: 24px;
}

.search-ico {
    width: 24px;
    height: 24px;
    margin-right: 16px;
    color: #a5abb1;
}

.filter-btn {
    width: 50px;
    height: 50px;
    display: flex;
    align-items: center;
    justify-content: center;
    background: #0a121c;
    border: 2px solid #192b3d;
    border-radius: 8px;
    color: #c4c9ce;
}

.filter-btn svg {
    width: 24px;
    height: 24px;
}

/* Messages */
.messages {
    flex: 1;
    min-height: 0;
    margin-top: 23px;
    display: flex;
    flex-direction: column;
    justify-content: flex-end;
    overflow: hidden;
}

.bubble {
    width: 979px;
    flex-shrink: 0;
    background: #0a1723;
    border: 2px solid #14263a;
    border-radius: 16px;
    padding: 14.5px 15px 17px;
    font-size: 19.45px;
    line-height: 28px;
    color: #d3d7db;
}

/* first message is scrolled under the search row */
.bubble-scrolled {
    padding-top: 5px;
    border-top: 0;
    border-radius: 0 0 16px 16px;
}

.bubble-first {
    line-height: 18px;
}

.bubble-list {
    list-style: none;
    margin: 33px 0 28px;
    display: flex;
    flex-direction: column;
    gap: 9.5px;
}

.bubble-list li {
    display: flex;
    align-items: center;
    gap: 6px;
    padding-left: 39px;
    position: relative;
}

.bubble-list li::before {
    content: "";
    position: absolute;
    left: 12px;
    top: 11px;
    width: 6px;
    height: 6px;
    border-radius: 50%;
    background: #56616c;
}

.emoji {
    width: 20px;
    height: 20px;
}

.show-details {
    font-size: 16.9px;
    line-height: 20px;
    color: #8d949b;
}

.bubble-details {
    margin-top: 11px;
}

.meta {
    height: 24px;
    flex-shrink: 0;
    margin: 5px 0 22px 5px;
    display: flex;
    align-items: center;
    gap: 10px;
    font-size: 16.8px;
    color: #4d5661;
}

.meta svg {
    width: 17px;
    height: 17px;
    color: #b0b5ba;
}

/* Composer */
.composer {
    height: 127px;
    flex-shrink: 0;
    background: #0d1620;
    border: 2px solid #16283a;
    border-radius: 8px;
    padding: 19px 16px 15px 16px;
    color: #4f5760;
    font-size: 19.5px;
    display: flex;
    flex-direction: column;
}

.composer-bar {
    margin-top: auto;
    display: flex;
    align-items: center;
    height: 39px;
}

.composer-hint {
    line-height: 24px;
}

.composer-llama { width: 17px; height: 24px; margin-left: 13px; color: #1c4a8e; }
.composer-model { margin-left: 12px; font-size: 17px; color: #6a7179; }
.composer-chev { width: 22px; height: 22px; margin-left: 10px; color: #6a7179; }
.composer-doc { width: 24px; height: 24px; margin-left: 31px; color: #6a7179; }
.composer-doc + .composer-chev { margin-left: 7px; }

.stop-btn {
    margin-left: auto;
    width: 39px;
    height: 39px;
    display: flex;
    align-items: center;
    justify-content: center;
    background: #f5474f;
    border-radius: 8px;
}

.stop-btn i {
    width: 19px;
    height: 19px;
    border: 2px solid #fff;
    border-radius: 2px;
}

/* Task timeline */
.tasks {
    list-style: none;
    margin-top: 23px;
}

.task {
    height: 80px;
    display: flex;
}

.rail {
    width: 30px;
    margin-left: -1px;
    display: flex;
    flex-direction: column;
    align-items: center;
    color: #15c55a;
}

.rail-top {
    width: 2px;
    height: 9px;
    background: #16283a;
    margin-bottom: 6px;
}

.rail-bottom {
    width: 2px;
    flex: 1;
    background: #16283a;
    margin-top: 5px;
}

.task-ok,
.task-run {
    width: 20px;
    height: 20px;
}

.task-body {
    padding: 11px 0 0 9px;
}

.task-title {
    font-size: 19.45px;
    line-height: 28px;
    color: #d9dde0;
}

.task-body .show-details {
    margin-top: 10px;
}
```
